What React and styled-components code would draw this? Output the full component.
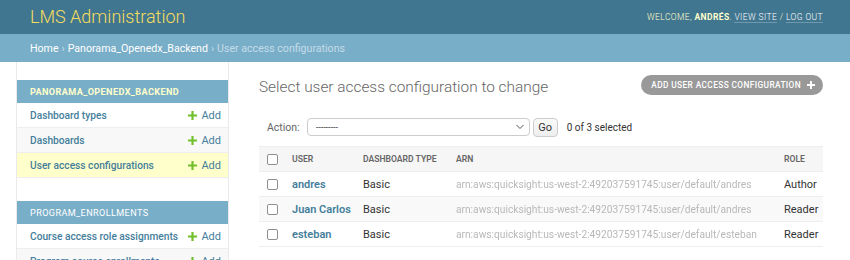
import React from "react";
import styled, { createGlobalStyle, css } from "styled-components";

const GlobalStyle = createGlobalStyle`
  html, body { margin: 0; padding: 0; background: #fff; }
  body {
    font-family: Roboto, "Liberation Sans", Arial, sans-serif;
    color: #333;
    font-size: 11px;
    overflow: hidden;
  }
  * { box-sizing: border-box; }
`;

const Header = styled.header`
  display: flex;
  align-items: center;
  justify-content: space-between;
  height: 34px;
  padding: 0 27px 0 30px;
  background: #417690;
  color: #ffc;
`;

const Branding = styled.h1`
  margin: 0;
  font-size: 18px;
  font-weight: 300;
  color: #f5dd5d;
  line-height: 1;
`;

const UserTools = styled.div`
  font-size: 8.5px;
  letter-spacing: 0.4px;
  text-transform: uppercase;
  color: #ffc;
  font-weight: 300;
  strong { font-weight: 700; color: #ffc; }
`;

const ToolLink = styled.a`
  color: #fff;
  text-decoration: none;
  border-bottom: 1px solid rgba(255, 255, 255, 0.25);
`;

const Breadcrumbs = styled.nav`
  display: flex;
  align-items: center;
  height: 28px;
  padding: 0 30px;
  background: #79aec8;
  color: #c4dce8;
  font-size: 10.6px;
`;

const Crumb = styled.a`
  color: #fff;
  text-decoration: none;
`;

const Sep = styled.span`
  margin: 0 3px;
`;

const Main = styled.div`
  display: flex;
  min-height: 200px;
`;

const Toggle = styled.div`
  width: 17px;
  flex: none;
  border-right: 1px solid #eaeaea;
`;

const NavSidebar = styled.aside`
  width: 212px;
  flex: none;
  border-right: 1px solid #eaeaea;
  padding-top: 18px;
`;

const Module = styled.div`
  margin-bottom: 23px;
`;

const Caption = styled.div`
  height: 23px;
  display: flex;
  align-items: center;
  padding: 0 13px;
  background: #79aec8;
  color: ${(p) => (p.$current ? "#ffc" : "#fff")};
  font-weight: ${(p) => (p.$current ? 700 : 400)};
  font-size: 9.1px;
  letter-spacing: 0.4px;
  text-transform: uppercase;
`;

const ModelRow = styled.div`
  height: 25px;
  display: flex;
  align-items: center;
  justify-content: space-between;
  padding: 0 7px 0 13px;
  border-bottom: 1px solid #eee;
  background: ${(p) => (p.$current ? "#ffc" : p.$alt ? "#f8f8f8" : "#fff")};
`;

const ModelLink = styled.a`
  color: #447e9b;
  font-weight: 500;
  font-size: 10.2px;
  white-space: nowrap;
  text-decoration: none;
`;

const AddLink = styled.a`
  display: flex;
  align-items: center;
  gap: 4px;
  color: #447e9b;
  font-size: 11px;
  text-decoration: none;
`;

const PlusIcon = ({ color = "#70bf2b", size = 9 }) => (
  <svg width={size} height={size} viewBox="0 0 10 10">
    <path d="M3.8 0h2.4v3.8H10v2.4H6.2V10H3.8V6.2H0V3.8h3.8z" fill={color} />
  </svg>
);

const Content = styled.main`
  flex: 1;
  padding: 12px 27px 0 30px;
`;

const TitleRow = styled.div`
  display: flex;
  align-items: center;
  justify-content: space-between;
  height: 26px;
`;

const Title = styled.h1`
  margin: 0;
  font-size: 15.4px;
  font-weight: 300;
  color: #666;
`;

const ObjectTool = styled.a`
  display: flex;
  align-items: center;
  gap: 6px;
  height: 20px;
  margin-top: -4px;
  padding: 0 8px 0 10px;
  border-radius: 10px;
  background: #999;
  color: #fff;
  font-size: 8.3px;
  font-weight: 500;
  letter-spacing: 0.4px;
  text-transform: uppercase;
  text-decoration: none;
`;

const Actions = styled.div`
  display: flex;
  align-items: center;
  height: 20px;
  margin-top: 17px;
  padding-left: 8px;
  color: #666;
  font-size: 10.5px;
`;

const Label = styled.span`
  margin-right: 7px;
`;

const SelectWrap = styled.div`
  position: relative;
  width: 223px;
  height: 18px;
`;

const Select = styled.select`
  appearance: none;
  width: 100%;
  height: 100%;
  border: 1px solid #ccc;
  border-radius: 4px;
  background: #fff;
  padding: 0 8px;
  font-family: inherit;
  font-size: 9px;
  color: #333;
`;

const Chevron = styled.svg`
  position: absolute;
  right: 6px;
  top: 6px;
  pointer-events: none;
`;

const GoButton = styled.button`
  height: 19px;
  width: 25px;
  margin-left: 3px;
  padding: 0;
  border: 1px solid #ccc;
  border-radius: 4px;
  background: linear-gradient(#fafafa, #eee);
  font-family: inherit;
  font-size: 11px;
  color: #333;
`;

const Counter = styled.span`
  margin-left: 9px;
  color: #333;
  font-size: 10px;
`;

const Table = styled.table`
  width: 100%;
  margin-top: 9px;
  border-collapse: collapse;
  table-layout: fixed;
`;

const HeadCell = styled.th`
  height: 25px;
  padding: 0 8px;
  text-align: left;
  background: #f6f6f6;
  border-top: 1px solid #eee;
  border-bottom: 1px solid #eee;
  color: #666;
  font-size: 8.6px;
  font-weight: 600;
  text-transform: uppercase;
  width: ${(p) => p.$w || "auto"};
`;

const Row = styled.tr`
  background: ${(p) => (p.$alt ? "#f9f9f9" : "#fff")};
`;

const cellBase = css`
  height: 25px;
  padding: 0 8px;
  border-bottom: 1px solid #eee;
  text-align: left;
  font-size: 11px;
  white-space: nowrap;
  overflow: hidden;
`;

const Cell = styled.td`
  ${cellBase};
  color: #333;
`;

const UserCell = styled.th`
  ${cellBase};
  font-weight: 600;
  a { color: #447e9b; text-decoration: none; }
`;

const ArnCell = styled.td`
  ${cellBase};
  font-size: 10.2px;
  color: #b8b8b8;
  span { filter: blur(0.6px); }
`;

const Check = styled.input.attrs({ type: "checkbox" })`
  appearance: none;
  display: block;
  width: 11px;
  height: 11px;
  margin: 0;
  border: 1px solid #8f8f8f;
  border-radius: 2px;
  background: #fff;
`;

const rows = [
  { user: "andres", type: "Basic", arn: "arn:aws:quicksight:us-west-2:492037591745:user/default/andres", role: "Author" },
  { user: "Juan Carlos", type: "Basic", arn: "arn:aws:quicksight:us-west-2:492037591745:user/default/andres", role: "Reader" },
  { user: "esteban", type: "Basic", arn: "arn:aws:quicksight:us-west-2:492037591745:user/default/esteban", role: "Reader" },
];

export default function App() {
  return (
    <>
      <GlobalStyle />
      <Header>
        <Branding>LMS Administration</Branding>
        <UserTools>
          Welcome, <strong>Andrés</strong>. <ToolLink href="#">View site</ToolLink> / <ToolLink href="#">Log out</ToolLink>
        </UserTools>
      </Header>
      <Breadcrumbs>
        <Crumb href="#">Home</Crumb>
        <Sep>›</Sep>
        <Crumb href="#">Panorama_Openedx_Backend</Crumb>
        <Sep>›</Sep>
        User access configurations
      </Breadcrumbs>
      <Main>
        <Toggle />
        <NavSidebar>
          <Module>
            <Caption $current>Panorama_Openedx_Backend</Caption>
            <ModelRow>
              <ModelLink href="#">Dashboard types</ModelLink>
              <AddLink href="#"><PlusIcon />Add</AddLink>
            </ModelRow>
            <ModelRow $alt>
              <ModelLink href="#">Dashboards</ModelLink>
              <AddLink href="#"><PlusIcon />Add</AddLink>
            </ModelRow>
            <ModelRow $current>
              <ModelLink href="#">User access configurations</ModelLink>
              <AddLink href="#"><PlusIcon />Add</AddLink>
            </ModelRow>
          </Module>
          <Module>
            <Caption>Program_Enrollments</Caption>
            <ModelRow>
              <ModelLink href="#">Course access role assignments</ModelLink>
              <AddLink href="#"><PlusIcon />Add</AddLink>
            </ModelRow>
            <ModelRow $alt>
              <ModelLink href="#">Program course enrollments</ModelLink>
              <AddLink href="#"><PlusIcon />Add</AddLink>
            </ModelRow>
          </Module>
        </NavSidebar>
        <Content>
          <TitleRow>
            <Title>Select user access configuration to change</Title>
            <ObjectTool href="#">
              Add user access configuration
              <PlusIcon color="#fff" size={8} />
            </ObjectTool>
          </TitleRow>
          <Actions>
            <Label>Action:</Label>
            <SelectWrap>
              <Select defaultValue="">
                <option value="">---------</option>
              </Select>
              <Chevron width="8" height="6" viewBox="0 0 8 6">
                <path d="M0.5 1l3.5 3.5L7.5 1" fill="none" stroke="#555" strokeWidth="1" />
              </Chevron>
            </SelectWrap>
            <GoButton>Go</GoButton>
            <Counter>0 of 3 selected</Counter>
          </Actions>
          <Table>
            <thead>
              <tr>
                <HeadCell $w="25px"><Check /></HeadCell>
                <HeadCell $w="71px">User</HeadCell>
                <HeadCell $w="93px">Dashboard type</HeadCell>
                <HeadCell>ARN</HeadCell>
                <HeadCell $w="47px">Role</HeadCell>
              </tr>
            </thead>
            <tbody>
              {rows.map((r, i) => (
                <Row key={r.user} $alt={i % 2 === 1}>
                  <Cell><Check /></Cell>
                  <UserCell><a href="#">{r.user}</a></UserCell>
                  <Cell>{r.type}</Cell>
                  <ArnCell><span>{r.arn}</span></ArnCell>
                  <Cell>{r.role}</Cell>
                </Row>
              ))}
            </tbody>
          </Table>
        </Content>
      </Main>
    </>
  );
}
